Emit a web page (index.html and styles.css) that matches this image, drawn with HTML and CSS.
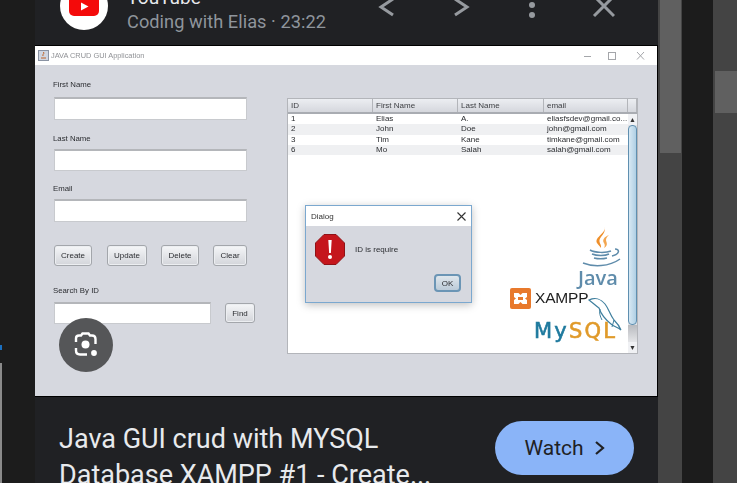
FILE: index.html
```html
<!DOCTYPE html>
<html lang="en">
<head>
    <meta charset="UTF-8">
    <meta name="viewport" content="width=device-width, initial-scale=1.0">
    <title>Java GUI crud with MYSQL</title>
    <link rel="stylesheet" href="styles.css">
</head>
<body>
    <div class="left-gutter">
        <div class="edge-blue"></div>
        <div class="edge-grey"></div>
    </div>

    <div class="panel">
        <div class="header">
            <div class="avatar">
                <svg width="30" height="22" viewBox="0 0 30 22">
                    <rect width="30" height="22" rx="5" fill="#f40a0a"/>
                    <path d="M12 8.500 L19.500 12.500 L12 16.500 Z" fill="#fff"/>
                </svg>
            </div>
            <div class="source">
                <div class="source-name">YouTube</div>
                <div class="source-meta">Coding with Elias · 23:22</div>
            </div>
            <div class="actions">
                <svg width="24" height="24" viewBox="0 0 24 24"><path d="M18 5 L6 13 L18 21" class="stroke"/></svg>
                <svg width="24" height="24" viewBox="0 0 24 24"><path d="M8 5 L20 13 L8 21" class="stroke"/></svg>
                <svg width="24" height="24" viewBox="0 0 24 24"><circle cx="13" cy="11" r="3"/><circle cx="13" cy="21" r="3"/></svg>
                <svg width="24" height="24" viewBox="0 0 24 24"><path d="M3 2 L23 22 M23 2 L3 22" class="stroke"/></svg>
            </div>
        </div>

        <div class="shot">
            <div class="shot-inner">
                <div class="win-title">
                    <svg width="11" height="11" viewBox="0 0 11 11">
                        <rect x="0.500" y="0.500" width="10" height="10" fill="#cfd6e2" stroke="#8a93a3"/>
                        <path d="M3 8 H8 M5 6 C4 4 7 4 5.500 2" stroke="#c0652a" fill="none"/>
                    </svg>
                    <span class="win-name">JAVA CRUD GUI Application</span>
                    <div class="win-btns">
                        <svg width="61" height="10" viewBox="0 0 61 10">
                            <path d="M0 5.500 H7" stroke="#a4a6aa"/>
                            <rect x="24.500" y="1.500" width="7" height="7" fill="none" stroke="#a4a6aa"/>
                            <path d="M53 1 L60 8.500 M60 1 L53 8.500" stroke="#a4a6aa"/>
                        </svg>
                    </div>
                </div>

                <div class="win-body">
                    <div class="form">
                        <label class="lbl">First Name</label>
                        <input class="txt txt-first" type="text">
                        <label class="lbl lbl-next">Last Name</label>
                        <input class="txt txt-short" type="text">
                        <label class="lbl lbl-email">Email</label>
                        <input class="txt txt-email" type="text">

                        <div class="btn-row">
                            <button class="btn btn-create">Create</button>
                            <button class="btn btn-update">Update</button>
                            <button class="btn btn-delete">Delete</button>
                            <button class="btn btn-clear">Clear</button>
                        </div>

                        <label class="lbl lbl-search">Search By ID</label>
                        <div class="search-row">
                            <input class="txt txt-search" type="text">
                            <button class="btn btn-find">Find</button>
                        </div>
                    </div>

                    <div class="table-box">
                        <div class="col-head">
                            <div>ID</div>
                            <div>First Name</div>
                            <div>Last Name</div>
                            <div>email</div>
                            <div></div>
                        </div>
                        <div class="table-main">
                            <div class="rows">
                                <div class="row"><span>1</span><span>Elias</span><span>A.</span><span>eliasfsdev@gmail.co...</span></div>
                                <div class="row alt"><span>2</span><span>John</span><span>Doe</span><span>john@gmail.com</span></div>
                                <div class="row"><span>3</span><span>Tim</span><span>Kane</span><span>timkane@gmail.com</span></div>
                                <div class="row alt"><span>6</span><span>Mo</span><span>Salah</span><span>salah@gmail.com</span></div>
                            </div>
                            <div class="scroll">
                                <div class="arrow">▲</div>
                                <div class="scroll-thumb"></div>
                                <div class="scroll-track"></div>
                                <div class="arrow">▼</div>
                            </div>
                        </div>
                    </div>
                </div>

                <!-- logos sit on top of the table in the video frame -->
                <svg class="java-cup" width="40" height="42" viewBox="0 0 40 42">
                    <path d="M22 1 C25 7 12 11 15 17 C16 19 18 20 19 22 C20 18 15 16 19 11 C21 8 24 6 22 1 Z" fill="#ef8f2a"/>
                    <path d="M27 9 C22 11 20 14 22 17 C23 19 23 20 22 22 C27 19 24 16 24 14 C24 12 25 11 27 9 Z" fill="#f3a650"/>
                    <path d="M8 24 C13 27 24 27 29 25 M10 28 C15 30 23 30 27 28 M12 32 C16 33 21 33 25 32 M1 37 C11 41 27 41 38 33 M33 23 C38 23 38 28 30 30" fill="none" stroke="#5f8cab" stroke-width="1.500"/>
                </svg>
                <div class="java-word">Java</div>

                <svg class="xampp-icon" width="21" height="21" viewBox="0 0 21 21">
                    <rect width="21" height="21" rx="2" fill="#e8792c"/>
                    <path d="M4 5 H8.500 L10.500 7 L12.500 5 H17 V9 L15 10.500 L17 12 V16 H12.500 L10.500 14 L8.500 16 H4 V12 L6 10.500 L4 9 Z" fill="#fff"/>
                    <path d="M8 9 H13 V12 H8 Z" fill="#e8792c"/>
                </svg>
                <div class="xampp-word">XAMPP</div>

                <svg class="dolphin" width="34" height="36" viewBox="0 0 34 36">
                    <path d="M1 3 C7 0 13 2 17 7 C21 12 22 18 26 23 C29 26 31 28 33 33 C30 30 26 30 23 27 C18 23 13 17 11 11 C8 9 5 6 1 3 Z" fill="none" stroke="#3f7f9e" stroke-width="1.200"/>
                    <path d="M12 12 C11 16 12 19 14 23 M26 23 L24 30" fill="none" stroke="#3f7f9e"/>
                </svg>
                <div class="mysql-word"><span class="my">My</span><span class="sql">SQL</span></div>

                <div class="dialog">
                    <div class="dialog-title">
                        <span>Dialog</span>
                        <svg width="9" height="9" viewBox="0 0 9 9"><path d="M0.500 0.500 L8.500 8.500 M8.500 0.500 L0.500 8.500" stroke="#333" stroke-width="1.100"/></svg>
                    </div>
                    <div class="dialog-body">
                        <svg width="30" height="31" viewBox="0 0 30 31">
                            <path d="M9 0.500 H21 L29.500 9 V22 L21 30.500 H9 L0.500 22 V9 Z" fill="#c5161c" stroke="#8f1216"/>
                            <path d="M13.300 6 H16.700 L15.900 19 H14.100 Z" fill="#fff"/>
                            <circle cx="15" cy="23" r="2" fill="#fff"/>
                        </svg>
                        <span class="dialog-msg">ID is require</span>
                    </div>
                    <div class="dialog-foot">
                        <button class="btn btn-ok">OK</button>
                    </div>
                </div>
            </div>

            <div class="lens">
                <svg width="32" height="32" viewBox="0 0 32 32">
                    <path d="M6 13 V9.500 C6 7.500 7.500 6.500 9 6.500 H11 L12.500 4.500 H18.500 L20 6.500 H22 C24 6.500 25.500 8 25.500 10 V15 M6 19 V21.500 C6 24 7.500 25.500 10 25.500 H17" fill="none" stroke="#fff" stroke-width="2.400"/>
                    <circle cx="15.500" cy="15.500" r="4" fill="#fff"/>
                    <circle cx="24" cy="24" r="2.900" fill="#fff"/>
                </svg>
            </div>
        </div>

        <div class="footer">
            <h1 class="video-title">Java GUI crud with MYSQL Database XAMPP #1 - Create...</h1>
            <button class="watch">Watch
                <svg width="12" height="16" viewBox="0 0 12 16"><path d="M3 2 L10 8 L3 14" fill="none" stroke="#202124" stroke-width="2.200"/></svg>
            </button>
        </div>
    </div>

    <div class="scrollbar scrollbar-inner"><div class="thumb"></div></div>
    <div class="gap"></div>
    <div class="scrollbar scrollbar-outer"><div class="thumb"></div></div>
</body>
</html>
```

FILE: styles.css
```css
html, body {
    height: 100%;
}

body {
    margin: 0;
    width: 737px;
    height: 483px;
    overflow: hidden;
    background: #1c1c1c;
    font-family: "Liberation Sans", Arial, sans-serif;
    display: grid;
    grid-template-columns: 35px 623px 24px 31px 24px;
}

/* bits of the window behind, showing at the left edge */
.left-gutter {
    display: flex;
    flex-direction: column;
    align-items: flex-start;
}

.edge-blue {
    width: 2px;
    height: 5px;
    margin-top: 345px;
    background: #1a6fc0;
}

.edge-grey {
    width: 2px;
    flex: 1;
    margin-top: 13px;
    background: #8a8a8a;
}

.panel {
    background: #202124;
    display: flex;
    flex-direction: column;
    height: 483px;
    overflow: hidden;
}

/* top strip, cut off by the window edge */
.header {
    height: 45px;
    flex: none;
    display: flex;
    align-items: flex-start;
    padding-left: 25px;
    padding-right: 43px;
    box-sizing: border-box;
}

.avatar {
    width: 48px;
    height: 48px;
    flex: none;
    margin-top: -18px;
    border-radius: 50%;
    background: #fff;
    display: flex;
    align-items: center;
    justify-content: center;
}

.avatar svg {
    margin-top: -2px;
}

.source {
    margin-left: 19px;
    margin-top: -14px;
    font-family: Roboto, "Liberation Sans", sans-serif;
}

.source-name {
    height: 24px;
    line-height: 24px;
    font-size: 19px;
    color: #e8eaed;
}

.source-meta {
    height: 24px;
    line-height: 24px;
    font-size: 18.200px;
    letter-spacing: 0.050px;
    color: #8f959c;
}

.actions {
    margin-left: auto;
    margin-top: -6px;
    display: flex;
    gap: 48px;
    fill: #969a9f;
}

.stroke {
    fill: none;
    stroke: #969a9f;
    stroke-width: 3;
}

/* the java window, shown as a video frame */
.shot {
    position: relative;
    height: 352px;
    flex: none;
    border-top: 1px solid #000;
    box-sizing: border-box;
    border-right: 1px solid #000;
    border-bottom: 1px solid #000;
}

.shot-inner {
    position: relative;
    height: 100%;
    background: #d6d8df;
    filter: blur(0.3px);
    color: #2b2d31;
}

.win-title {
    height: 19px;
    background: #fff;
    display: flex;
    align-items: center;
    padding-left: 3px;
    padding-right: 12px;
}

.win-name {
    margin-left: 2px;
    font-size: 7.400px;
    color: #8f9195;
}

.win-btns {
    margin-left: auto;
    display: flex;
}

.win-body {
    display: flex;
}

.form {
    width: 252px;
    flex: none;
    padding-left: 18px;
    padding-top: 15px;
    box-sizing: border-box;
}

.lbl {
    display: block;
    height: 10px;
    line-height: 10px;
    font-size: 7.800px;
    color: #2b2d31;
}

.lbl-next {
    margin-top: 14px;
}

.lbl-email {
    margin-top: 13px;
}

.lbl-search {
    margin-top: 20px;
}

.txt {
    display: block;
    width: 193px;
    height: 23px;
    margin: 7px 0 0 1px;
    padding: 0;
    box-sizing: border-box;
    background: #fff;
    border: 1px solid #c8cace;
    border-top: 2px solid #b4b6ba;
    border-radius: 0;
}

.txt-short {
    height: 22px;
    margin-top: 5px;
}

.txt-email {
    margin-top: 5px;
}

.txt-search {
    width: 157px;
    height: 22px;
    margin-top: 0;
}

.btn {
    padding: 0;
    font-family: "Liberation Sans", Arial, sans-serif;
    font-size: 8px;
    color: #2b2d31;
    border: 1px solid #a3a6ab;
    border-radius: 3px;
    background: linear-gradient(#f5f6f8, #d3d5da);
    box-shadow: inset 0 0 0 1px #eceef1;
}

.btn-row {
    display: flex;
    height: 21px;
    margin: 23px 0 0 1px;
}

.btn-create { width: 38px; }
.btn-update { width: 40px; margin-left: 15px; }
.btn-delete { width: 38px; margin-left: 14px; }
.btn-clear { width: 34px; margin-left: 14px; }

.search-row {
    display: flex;
    align-items: center;
    margin-top: 6px;
}

.btn-find {
    width: 30px;
    height: 20px;
    margin-left: 14px;
}

.table-box {
    width: 351px;
    height: 256px;
    margin-top: 33px;
    flex: none;
    background: #fff;
    border: 1px solid #b3b5ba;
    box-sizing: border-box;
    display: flex;
    flex-direction: column;
    font-size: 8px;
}

.col-head {
    height: 15px;
    flex: none;
    box-sizing: border-box;
    display: grid;
    grid-template-columns: 85px 85px 86px 84px 1fr;
    background: linear-gradient(#eceef2, #d5d7dd);
    border-bottom: 2px solid #a9acb2;
    line-height: 13px;
    color: #3f4145;
}

.col-head div {
    padding-left: 3px;
    border-right: 1px solid #b3b5ba;
}

.table-main {
    flex: 1;
    display: flex;
    min-height: 0;
}

.rows {
    width: 340px;
    flex: none;
}

.row {
    height: 10.300px;
    line-height: 10.300px;
    display: grid;
    grid-template-columns: 85px 85px 86px 84px;
    color: #2b2d31;
}

.row span {
    padding-left: 3px;
    white-space: nowrap;
}

.alt {
    background: #eff0f2;
}

.scroll {
    flex: 1;
    display: flex;
    flex-direction: column;
    background: #e2e4e8;
}

.arrow {
    height: 11px;
    flex: none;
    font-size: 7px;
    line-height: 11px;
    text-align: center;
    color: #333;
    background: #f0f1f4;
}

.scroll-thumb {
    height: 200px;
    flex: none;
    box-sizing: border-box;
    border: 1px solid #5f8fb0;
    border-radius: 4px;
    background: linear-gradient(90deg, #d7e8f3, #afcfe4);
}

.scroll-track {
    flex: 1;
    background: linear-gradient(#b9bbbf, #e4e5e8);
}

/* logos */
.java-cup {
    position: absolute;
    left: 547px;
    top: 180px;
}

.java-word {
    position: absolute;
    left: 543px;
    top: 218px;
    font: 600 20px "Open Sans", sans-serif;
    color: #5f8cab;
}

.xampp-icon {
    position: absolute;
    left: 475px;
    top: 242px;
}

.xampp-word {
    position: absolute;
    left: 500px;
    top: 243px;
    font-size: 15.500px;
    letter-spacing: -0.200px;
    color: #222;
}

.dolphin {
    position: absolute;
    left: 553px;
    top: 251px;
}

.mysql-word {
    position: absolute;
    left: 499px;
    top: 273px;
    font: 21px "DejaVu Sans", sans-serif;
    letter-spacing: 2.200px;
    -webkit-text-stroke: 0.6px;
}

.my { color: #1f7a9e; }
.sql { color: #e09a2a; }

.dialog {
    position: absolute;
    left: 270px;
    top: 159px;
    width: 167px;
    height: 98px;
    box-sizing: border-box;
    border: 1px solid #7ba8cf;
    background: #d6d8df;
    box-shadow: 0 2px 8px rgba(0, 0, 0, 0.25);
    font-size: 8px;
    display: flex;
    flex-direction: column;
}

.dialog-title {
    height: 20px;
    flex: none;
    background: #fff;
    display: flex;
    align-items: center;
    justify-content: space-between;
    padding: 0 5px 0 5px;
    color: #333;
}

.dialog-body {
    display: flex;
    align-items: center;
    padding: 8px 0 0 9px;
}

.dialog-msg {
    margin-left: 10px;
    color: #2b2d31;
}

.dialog-foot {
    display: flex;
    justify-content: flex-end;
    padding: 9px 10px 0 0;
}

.btn-ok {
    width: 27px;
    height: 18px;
    border: 2px solid #6b95b5;
    border-radius: 4px;
    background: linear-gradient(#dfe6ec, #bccbd8);
    box-shadow: none;
}

.lens {
    position: absolute;
    left: 24px;
    top: 272px;
    width: 54px;
    height: 54px;
    border-radius: 50%;
    background: #555658;
    display: flex;
    align-items: center;
    justify-content: center;
}

/* bottom title and button */
.footer {
    flex: 1;
    display: flex;
    align-items: flex-start;
    padding: 24px 24px 0 24px;
    min-height: 0;
}

.video-title {
    width: 400px;
    margin: 0;
    font-family: Roboto, "Liberation Sans", sans-serif;
    font-weight: 400;
    font-size: 27px;
    line-height: 36px;
    color: #e8eaed;
}

.watch {
    margin-left: auto;
    width: 139px;
    height: 54px;
    border: none;
    border-radius: 27px;
    background: #8ab4f8;
    color: #202124;
    font-family: Roboto, "Liberation Sans", sans-serif;
    font-size: 21px;
    display: flex;
    align-items: center;
    justify-content: center;
    gap: 9px;
}

.scrollbar {
    background: #444;
}

.scrollbar-inner .thumb {
    height: 153px;
    margin: 0 1px 0 2px;
    background: #606060;
}

.scrollbar-outer .thumb {
    height: 42px;
    margin: 71px 0 0 2px;
    background: #606060;
}

.gap {
    background: #1c1c1c;
}
```
